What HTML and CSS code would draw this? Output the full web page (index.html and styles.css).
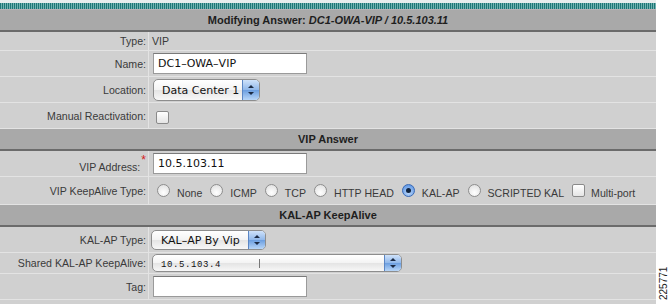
FILE: index.html
```html
<!DOCTYPE html>
<html lang="en">
<head>
    <meta charset="UTF-8">
    <title>Modifying Answer</title>
    <link rel="stylesheet" href="styles.css">
</head>
<body>

<div class="page">
    <div class="stripe"></div>

    <table class="form">
        <tr class="section">
            <td colspan="2">Modifying Answer: <em>DC1-OWA-VIP / 10.5.103.11</em></td>
        </tr>
        <tr class="row-short">
            <td class="label">Type:</td>
            <td class="value">VIP</td>
        </tr>
        <tr>
            <td class="label">Name:</td>
            <td class="value"><span class="textbox">DC1&ndash;OWA&ndash;VIP</span></td>
        </tr>
        <tr>
            <td class="label">Location:</td>
            <td class="value">
                <span class="select sel-location">Data Center 1<span class="stepper"></span></span>
            </td>
        </tr>
        <tr>
            <td class="label">Manual Reactivation:</td>
            <td class="value"><span class="check"></span></td>
        </tr>

        <tr class="section">
            <td colspan="2">VIP Answer</td>
        </tr>
        <tr>
            <td class="label">VIP Address:<sup class="req">*</sup></td>
            <td class="value"><span class="textbox">10.5.103.11</span></td>
        </tr>
        <tr class="row-tall">
            <td class="label">VIP KeepAlive Type:</td>
            <td class="value">
                <div class="options">
                    <span class="opt"><span class="radio"></span>None</span>
                    <span class="opt"><span class="radio"></span>ICMP</span>
                    <span class="opt"><span class="radio"></span>TCP</span>
                    <span class="opt"><span class="radio"></span>HTTP HEAD</span>
                    <span class="opt"><span class="radio on"></span>KAL-AP</span>
                    <span class="opt"><span class="radio"></span>SCRIPTED KAL</span>
                    <span class="opt"><span class="check small"></span>Multi-port</span>
                </div>
            </td>
        </tr>

        <tr class="section">
            <td colspan="2">KAL-AP KeepAlive</td>
        </tr>
        <tr>
            <td class="label">KAL-AP Type:</td>
            <td class="value">
                <span class="select sel-type">KAL&ndash;AP By Vip<span class="stepper"></span></span>
            </td>
        </tr>
        <tr class="row-mid">
            <td class="label">Shared KAL-AP KeepAlive:</td>
            <td class="value">
                <span class="select sel-shared"><span class="mono">10.5.103.4</span><span class="caret"></span><span class="stepper"></span></span>
            </td>
        </tr>
        <tr>
            <td class="label">Tag:</td>
            <td class="value"><span class="textbox"></span></td>
        </tr>
    </table>

    <div class="figno">225771</div>
</div>

</body>
</html>
```

FILE: styles.css
```css
body {
    margin: 0;
    background: #ffffff;
    font-family: "Liberation Sans", Arial, sans-serif;
    font-size: 10.6px;
    color: #333;
}
.page {
    position: relative;
    width: 656px;
    height: 304px;
    background: #d0d0d0;
}
.stripe {
    height: 6px;
    border-top: 3px solid #e8eded;
    border-bottom: 1px solid #b9b1b5;
    background: repeating-linear-gradient(to right, #1d7676 0, #1d7676 1px, #72b2b0 1px, #72b2b0 2px);
}
.form {
    width: 656px;
    border-collapse: collapse;
}
.form td {
    padding: 0;
    height: 25px;
    border-bottom: 1px solid #e3e3e3;
}
.row-short td {
    height: 18px;
}
.row-mid td {
    height: 20px;
}
.row-tall td {
    height: 27px;
}
.section td {
    height: 20px;
    background: #a9a9a9;
    border-bottom: 2px solid #6b6b6b;
    text-align: center;
    font-weight: bold;
    font-size: 11px;
    color: #1e1e1e;
}
.section em {
    font-style: italic;
}
.label {
    width: 146px;
    padding-right: 2px !important;
    text-align: right;
    border-right: 1px solid #e3e3e3;
    color: #3a3a3a;
}
.value {
    padding-left: 3px !important;
    color: #3a3a3a;
}
.req {
    color: #d42020;
    font-size: 12px;
    position: relative;
    top: -2px;
    margin-left: 1px;
}

.textbox {
    display: block;
    width: 148px;
    height: 19px;
    margin-left: 1px;
    padding-left: 4px;
    background: #fff;
    border: 1px solid #9a9a9a;
    border-top-color: #7a7a7a;
    font-family: "DejaVu Sans", sans-serif;
    font-size: 11px;
    line-height: 20px;
    color: #111;
}

.select {
    position: relative;
    display: block;
    height: 19px;
    border: 1px solid #8d8d8d;
    border-radius: 5px;
    background: linear-gradient(#ffffff, #f3f3f3 50%, #e4e4e4 51%, #f7f7f7);
    font-family: "DejaVu Sans", sans-serif;
    font-size: 11px;
    line-height: 19px;
    color: #111;
    box-sizing: border-box;
}
.sel-location {
    width: 107px;
    height: 22px;
    line-height: 21px;
    margin-left: 1px;
    padding-left: 8px;
}
.sel-type {
    width: 115px;
    height: 20px;
    margin-left: -1px;
    padding-left: 9px;
}
.sel-shared {
    width: 250px;
    height: 18px;
    line-height: 17px;
    padding-left: 8px;
}
.mono {
    font-family: "Liberation Mono", monospace;
    font-size: 9px;
    letter-spacing: 0.6px;
}
.caret {
    position: absolute;
    left: 106px;
    top: 4px;
    width: 1px;
    height: 9px;
    background: #777;
}
.stepper {
    position: absolute;
    right: 0;
    top: 0;
    bottom: 0;
    width: 16px;
    border-left: 1px solid #5b86c4;
    border-radius: 0 4px 4px 0;
    background: linear-gradient(#cfe2fa, #8fb7ea 50%, #6b9ee0 51%, #b8d6f8);
}
.stepper::before,
.stepper::after {
    content: "";
    position: absolute;
    left: 5px;
    border-left: 3px solid transparent;
    border-right: 3px solid transparent;
}
.stepper::before {
    top: calc(50% - 5px);
    border-bottom: 3px solid #1b2a44;
}
.stepper::after {
    top: calc(50% + 2px);
    border-top: 3px solid #1b2a44;
}

.check {
    display: inline-block;
    width: 11px;
    height: 11px;
    margin-left: 4px;
    margin-top: 3px;
    border: 1px solid #8a8a8a;
    border-radius: 2px;
    background: linear-gradient(#ffffff, #e4e4e4);
    vertical-align: middle;
}
.check.small {
    margin: 0 6px 4px 0;
}

.options {
    display: flex;
    align-items: center;
    padding-left: 5px;
}
.opt {
    display: inline-flex;
    align-items: center;
    margin-right: 8px;
    padding-top: 4px;
    line-height: 12px;
}
.radio {
    display: inline-block;
    width: 11px;
    height: 11px;
    margin: 0 7px 4px 0;
    border: 1px solid #8c8c8c;
    border-radius: 50%;
    background: radial-gradient(circle at 50% 70%, #ffffff, #dcdcdc);
}
.radio.on {
    position: relative;
    border-color: #3c6bb4;
    background: radial-gradient(circle at 50% 70%, #bcd8fb, #4c8ae0);
}
.radio.on::after {
    content: "";
    position: absolute;
    left: 3px;
    top: 3px;
    width: 5px;
    height: 5px;
    border-radius: 50%;
    background: #10243f;
}

.figno {
    position: absolute;
    left: 659px;
    top: 264px;
    width: 36px;
    transform-origin: 0 0;
    transform: rotate(-90deg) translateX(-36px);
    font-family: "Liberation Sans", Arial, sans-serif;
    font-size: 10px;
    line-height: 10px;
    color: #222;
}
```
